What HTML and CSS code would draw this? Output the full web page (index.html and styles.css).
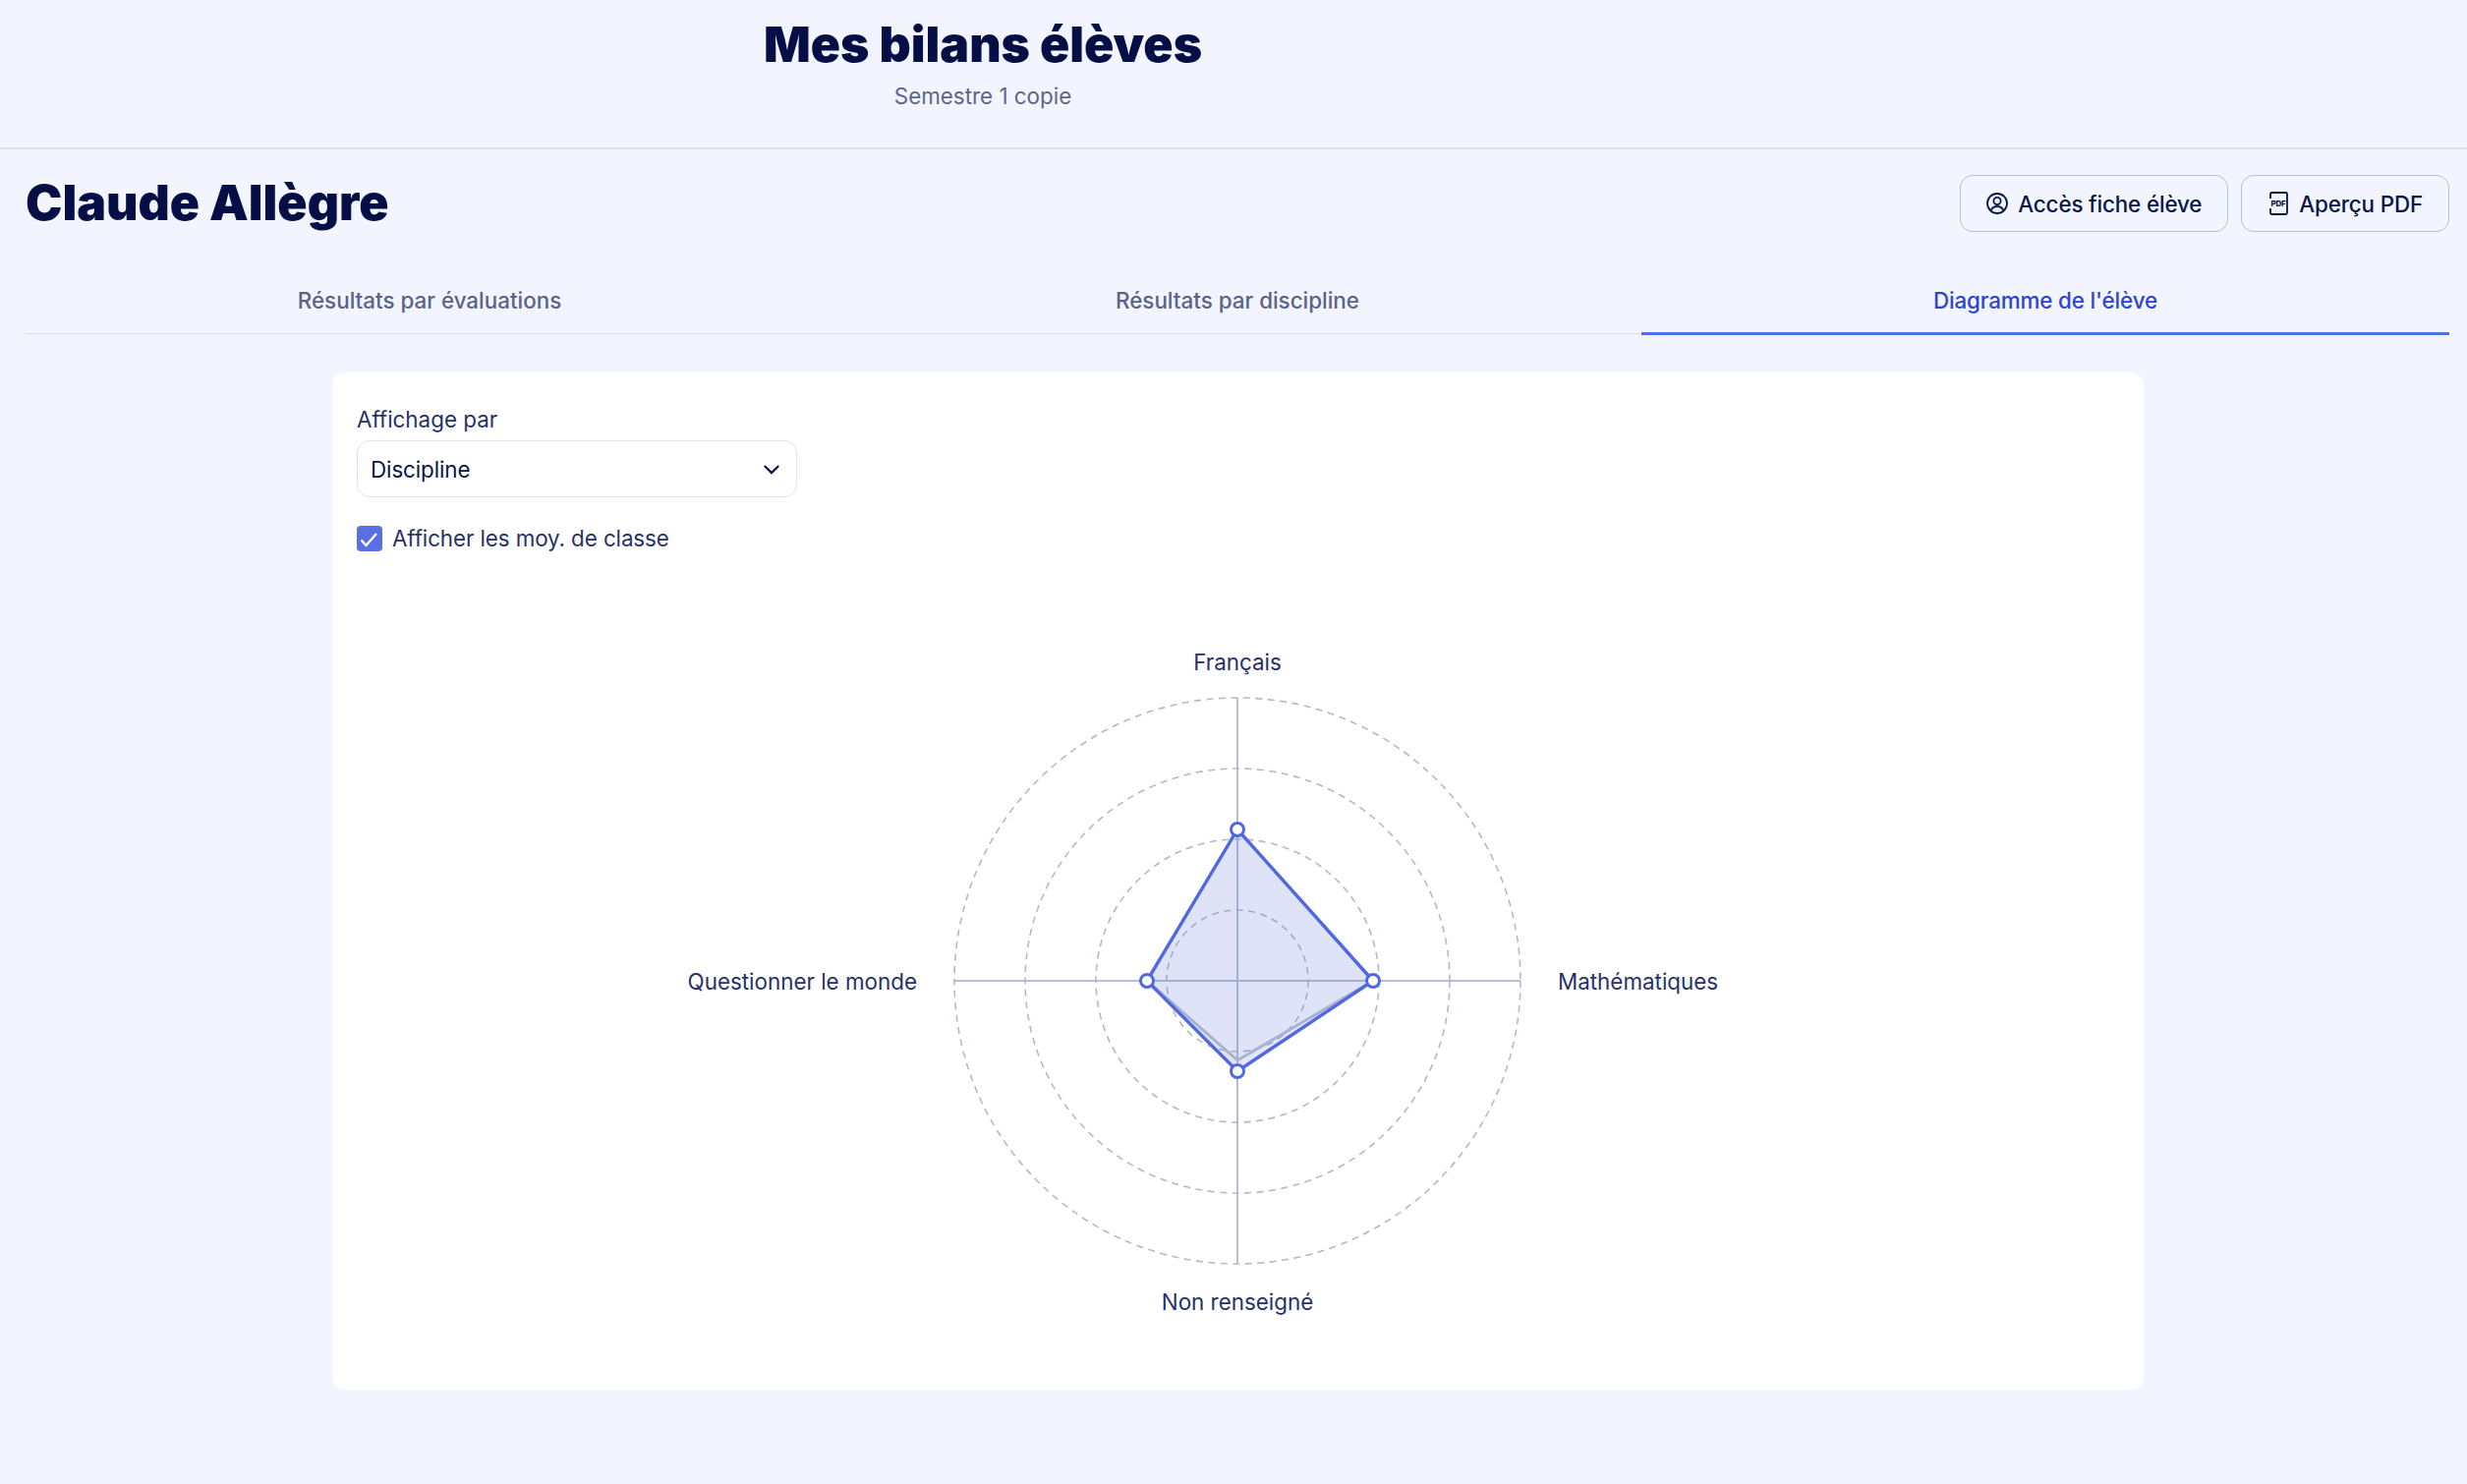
FILE: index.html
```html
<!DOCTYPE html>
<html lang="fr">
<head>
    <meta charset="UTF-8">
    <title>Mes bilans élèves</title>
    <link rel="stylesheet" href="styles.css">
</head>
<body>
    <header class="page-header">
        <h1 class="page-title">Mes bilans élèves</h1>
        <p class="page-subtitle">Semestre 1 copie</p>
    </header>

    <main class="page-content">
        <div class="student-row">
            <h2 class="student-name">Claude Allègre</h2>
            <div class="student-actions">
                <button class="action-btn" type="button">
                    <svg class="action-icon" viewBox="0 0 22 24" fill="none" stroke="currentColor" stroke-width="1.8">
                        <circle cx="11" cy="12" r="10"/>
                        <circle cx="11" cy="9.5" r="3.6"/>
                        <path d="M4.5 19.3c1.2-2.9 3.5-4.3 6.5-4.3s5.3 1.4 6.5 4.3"/>
                    </svg>
                    Accès fiche élève
                </button>
                <button class="action-btn" type="button">
                    <svg class="action-icon" viewBox="0 0 22 24" fill="none" stroke="currentColor" stroke-width="1.8">
                        <path d="M3 7V2.5A1.5 1.5 0 0 1 4.5 1h14A1.5 1.5 0 0 1 20 2.5v19a1.5 1.5 0 0 1-1.5 1.5h-14A1.5 1.5 0 0 1 3 21.5V17"/>
                        <text class="pdf-mark" x="11" y="15" text-anchor="middle">PDF</text>
                    </svg>
                    Aperçu PDF
                </button>
            </div>
        </div>

        <nav class="tabs">
            <a class="tab">Résultats par évaluations</a>
            <a class="tab">Résultats par discipline</a>
            <a class="tab tab-active">Diagramme de l'élève</a>
        </nav>

        <section class="card">
            <div class="field-label">Affichage par</div>
            <div class="select-box">
                <span>Discipline</span>
                <svg class="select-arrow" viewBox="0 0 20 12" fill="none" stroke="currentColor" stroke-width="2.4">
                    <path d="M2 2l8 8 8-8"/>
                </svg>
            </div>
            <div class="check-row">
                <span class="check-box">
                    <svg viewBox="0 0 26 26" fill="none" stroke="#fff" stroke-width="2.4">
                        <path d="M4.5 14.5l5 5.5L20 8"/>
                    </svg>
                </span>
                <span>Afficher les moy. de classe</span>
            </div>

            <svg class="radar" viewBox="0 0 1792 705" width="1792" height="705">
                <g transform="translate(896 359)">
                    <line class="radar-axis" x1="0" y1="-288" x2="0" y2="288"/>
                    <line class="radar-axis" x1="-288" y1="0" x2="288" y2="0"/>
                    <circle class="radar-ring" r="72"/>
                    <circle class="radar-ring" r="144"/>
                    <circle class="radar-ring" r="216"/>
                    <circle class="radar-ring" r="288"/>
                    <polygon class="radar-class" points="0,-154 138,0 0,81 -92,0"/>
                    <polygon class="radar-student" points="0,-154 138,0 0,92 -92,0"/>
                    <circle class="radar-point" cx="0" cy="-154" r="6.5"/>
                    <circle class="radar-point" cx="138" cy="0" r="6.5"/>
                    <circle class="radar-point" cx="0" cy="92" r="6.5"/>
                    <circle class="radar-point" cx="-92" cy="0" r="6.5"/>
                    <text class="radar-label" x="0" y="-316" text-anchor="middle">Français</text>
                    <text class="radar-label" x="326" y="9" text-anchor="start">Mathématiques</text>
                    <text class="radar-label" x="0" y="335" text-anchor="middle">Non renseigné</text>
                    <text class="radar-label" x="-326" y="9" text-anchor="end">Questionner le monde</text>
                </g>
            </svg>
        </section>
    </main>
</body>
</html>
```

FILE: styles.css
```css
* {
    margin: 0;
    padding: 0;
    box-sizing: border-box;
}

body {
    font-family: 'Inter', "Liberation Sans", sans-serif;
    font-size: 22.4px;
    background-color: #f2f5fd;
    color: #0a1547;
    min-height: 100vh;
}

.page-header {
    height: 152px;
    border-bottom: 2px solid #dde1ed;
    padding: 14px 510px 0 0;
    text-align: center;
}

.page-title {
    font-size: 50px;
    font-weight: 900;
    line-height: 62px;
    color: #050e45;
}

.page-subtitle {
    margin-top: 8px;
    color: #5f6789;
    line-height: 28px;
}

.page-content {
    padding: 0 18px 0 26px;
}

.student-row {
    display: flex;
    justify-content: space-between;
    align-items: center;
    padding-top: 26px;
    height: 84px;
}

.student-name {
    margin-top: -3px;
    font-size: 50px;
    font-weight: 900;
    color: #050e45;
}

.student-actions {
    display: flex;
    gap: 13px;
}

.action-btn {
    display: flex;
    align-items: center;
    gap: 10px;
    height: 58px;
    padding: 0 26px;
    border: 1.6px solid #b6bdd6;
    border-radius: 13px;
    background: transparent;
    color: #0a1547;
    font-family: inherit;
    font-size: 22.4px;
    font-weight: 500;
    letter-spacing: -0.15px;
}

.action-icon {
    width: 22px;
    height: 24px;
    overflow: visible;
}

.pdf-mark {
    font-size: 8px;
    font-weight: 800;
    stroke: none;
    fill: currentColor;
}

.tabs {
    display: grid;
    grid-template-columns: repeat(3, 1fr);
    margin-top: 57px;
    border-bottom: 1px solid #d9deea;
}

.tab {
    height: 48px;
    margin-bottom: -2px;
    text-align: center;
    line-height: 26px;
    font-weight: 500;
    color: #5a6389;
}

.tab-active {
    color: #2f45cf;
    border-bottom: 3px solid #5170e4;
    letter-spacing: -0.15px;
}

.card {
    width: 1843px;
    height: 1035px;
    margin: 39px 0 0 312px;
    padding: 34px 25px 0;
    background-color: #fff;
    border-radius: 13px;
    color: #263268;
}

.field-label {
    line-height: 28px;
}

.select-box {
    display: flex;
    justify-content: space-between;
    align-items: center;
    width: 448px;
    height: 58px;
    margin-top: 7px;
    padding: 0 16px 0 13px;
    border: 1.6px solid #e0e3f1;
    border-radius: 13px;
    color: #0a1547;
    letter-spacing: -0.1px;
}

.select-arrow {
    width: 18px;
    height: 11px;
}

.check-row {
    display: flex;
    align-items: center;
    gap: 10px;
    margin-top: 29px;
    line-height: 26px;
    letter-spacing: -0.1px;
}

.check-box {
    width: 26px;
    height: 26px;
    border-radius: 4px;
    background-color: #5a70e2;
}

.check-box svg {
    display: block;
}

.radar {
    display: block;
    margin-top: 78px;
}

.radar-axis {
    stroke: #b5bed6;
    stroke-width: 2;
}

.radar-ring {
    fill: none;
    stroke: #b3b9cc;
    stroke-width: 1.6;
    stroke-dasharray: 7 5.5;
}

.radar-class {
    fill: rgba(170, 180, 200, 0.06);
    stroke: #bcc0d2;
    stroke-width: 3;
}

.radar-student {
    fill: rgba(81, 107, 224, 0.16);
    stroke: #5069e2;
    stroke-width: 3.4;
}

.radar-point {
    fill: #fff;
    stroke: #5069e2;
    stroke-width: 3;
}

.radar-label {
    font-size: 22.4px;
    fill: #263268;
}
```
